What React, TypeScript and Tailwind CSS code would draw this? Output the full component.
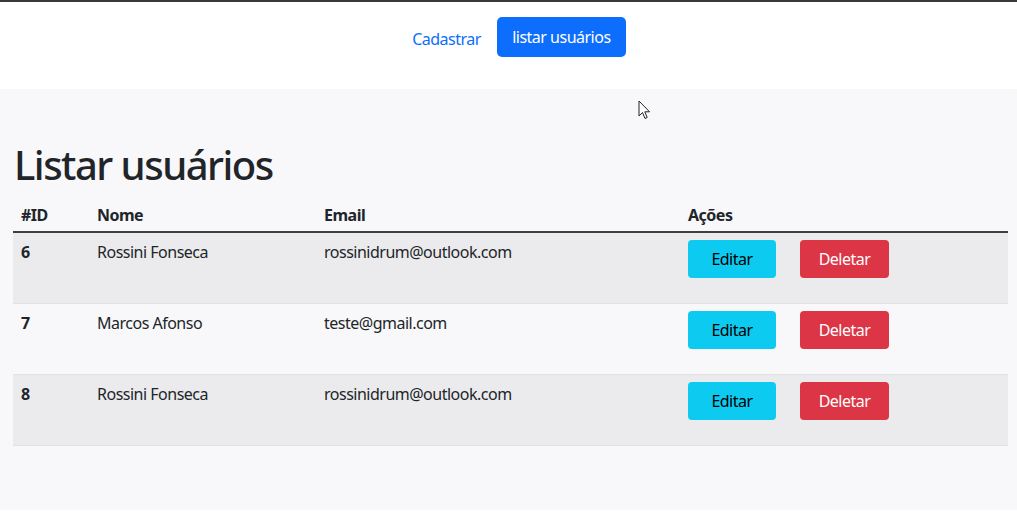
const users = [
  { id: 6, nome: 'Rossini Fonseca', email: 'rossinidrum@outlook.com' },
  { id: 7, nome: 'Marcos Afonso', email: 'teste@gmail.com' },
  { id: 8, nome: 'Rossini Fonseca', email: 'rossinidrum@outlook.com' },
];

export default function App() {
  return (
    <div className="relative h-[531px] w-[1017px] overflow-hidden bg-white tracking-[-0.5px] text-[#212529]" style={{ fontFamily: '"Noto Sans", "Open Sans", sans-serif' }}>
      {/* top strip */}
      <div className="h-[2px] bg-[#3a3a3a]" />

      {/* nav */}
      <nav className="flex h-[87px] items-start justify-center gap-4 pl-[21px] pt-[15px]">
        <a className="mt-[10px] text-[16px] text-[#0d6efd]">Cadastrar</a>
        <button className="h-[40px] w-[129px] rounded-[5px] bg-[#0d6efd] text-[16px] text-white">listar usuários</button>
      </nav>

      {/* main */}
      <main className="h-[421px] bg-[#f8f8fa] px-[13px] pt-[52px]">
        <h1 className="mb-[14px] pl-px text-[40px] font-medium leading-[48px] tracking-[-1.5px]">Listar usuários</h1>

        <table className="w-[995px] border-collapse text-left text-[16px]">
          <thead>
            <tr className="border-b-2 border-[#3f3f3f] font-bold">
              <th className="w-[76px] px-2 pb-[4px] align-top">#ID</th>
              <th className="w-[227px] px-2 pb-[4px] align-top">Nome</th>
              <th className="w-[364px] px-2 pb-[4px] align-top">Email</th>
              <th className="px-2 pb-[4px] align-top">Ações</th>
            </tr>
          </thead>
          <tbody>
            {users.map((u, i) => (
              <tr key={u.id} className={`h-[71px] border-b border-[#dee2e6] ${i % 2 === 0 ? 'bg-[#ebebed]' : ''}`}>
                <td className="px-2 pt-[7px] align-top font-bold">{u.id}</td>
                <td className="px-2 pt-[7px] align-top">{u.nome}</td>
                <td className="px-2 pt-[7px] align-top">{u.email}</td>
                <td className="px-2 pt-[7px] align-top">
                  <div className="flex gap-6">
                    <button className="h-[38px] w-[88px] rounded-[4px] bg-[#0dcaf0] text-black">Editar</button>
                    <button className="h-[38px] w-[89px] rounded-[4px] bg-[#dc3545] text-white">Deletar</button>
                  </div>
                </td>
              </tr>
            ))}
          </tbody>
        </table>
      </main>

      {/* mouse pointer */}
      <svg className="absolute left-[638px] top-[100px]" width="13" height="20" viewBox="0 0 13 20">
        <path d="M1 1 L1 16 L4.5 12.5 L7 18.5 L9.2 17.5 L6.8 11.8 L11.5 11.8 Z" fill="white" stroke="#222" strokeWidth="1" />
      </svg>
    </div>
  );
}
